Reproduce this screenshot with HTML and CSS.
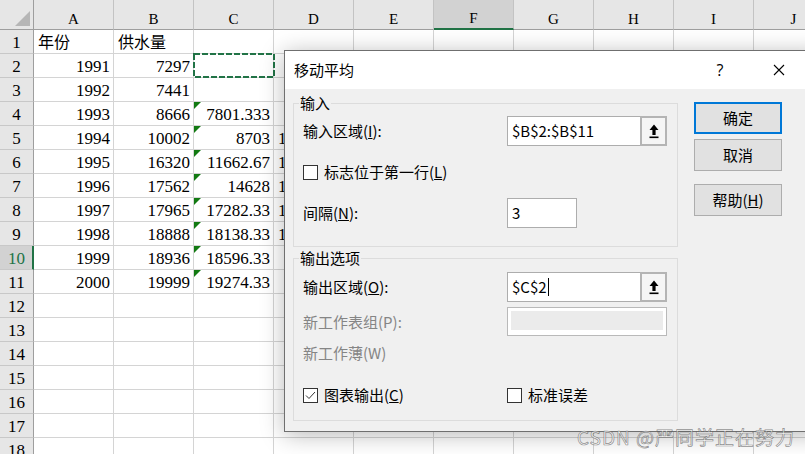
FILE: index.html
```html
<!DOCTYPE html>
<html lang="zh">
<head>
<meta charset="utf-8">
<title>移动平均</title>
<link rel="stylesheet" href="styles.css">
</head>
<body>
<div class="sheet">
  <div class="row hdr">
    <div class="rh corner"><span class="ctri"></span></div>
    <div class="ch">A</div><div class="ch">B</div><div class="ch">C</div><div class="ch">D</div><div class="ch">E</div>
    <div class="ch sel">F</div><div class="ch">G</div><div class="ch">H</div><div class="ch">I</div><div class="ch">J</div>
  </div>
  <div class="row"><div class="rh">1</div><div class="c cjk">年份</div><div class="c cjk">供水量</div><div class="c"></div><div class="c"></div><div class="c"></div><div class="c"></div><div class="c"></div><div class="c"></div><div class="c"></div><div class="c"></div></div>
  <div class="row"><div class="rh">2</div><div class="c n">1991</div><div class="c n">7297</div><div class="c"><svg class="ants" viewBox="0 0 82 25"><rect x="1" y="1" width="80" height="23" fill="none" stroke="#217346" stroke-width="2" stroke-dasharray="6 2"/></svg></div><div class="c"></div><div class="c"></div><div class="c"></div><div class="c"></div><div class="c"></div><div class="c"></div><div class="c"></div></div>
  <div class="row"><div class="rh">3</div><div class="c n">1992</div><div class="c n">7441</div><div class="c"></div><div class="c"></div><div class="c"></div><div class="c"></div><div class="c"></div><div class="c"></div><div class="c"></div><div class="c"></div></div>
  <div class="row"><div class="rh">4</div><div class="c n">1993</div><div class="c n">8666</div><div class="c n tri">7801.333</div><div class="c"></div><div class="c"></div><div class="c"></div><div class="c"></div><div class="c"></div><div class="c"></div><div class="c"></div></div>
  <div class="row"><div class="rh">5</div><div class="c n">1994</div><div class="c n">10002</div><div class="c n tri">8703</div><div class="c">1</div><div class="c"></div><div class="c"></div><div class="c"></div><div class="c"></div><div class="c"></div><div class="c"></div></div>
  <div class="row"><div class="rh">6</div><div class="c n">1995</div><div class="c n">16320</div><div class="c n tri">11662.67</div><div class="c">1</div><div class="c"></div><div class="c"></div><div class="c"></div><div class="c"></div><div class="c"></div><div class="c"></div></div>
  <div class="row"><div class="rh">7</div><div class="c n">1996</div><div class="c n">17562</div><div class="c n tri">14628</div><div class="c">1</div><div class="c"></div><div class="c"></div><div class="c"></div><div class="c"></div><div class="c"></div><div class="c"></div></div>
  <div class="row"><div class="rh">8</div><div class="c n">1997</div><div class="c n">17965</div><div class="c n tri">17282.33</div><div class="c">1</div><div class="c"></div><div class="c"></div><div class="c"></div><div class="c"></div><div class="c"></div><div class="c"></div></div>
  <div class="row"><div class="rh">9</div><div class="c n">1998</div><div class="c n">18888</div><div class="c n tri">18138.33</div><div class="c">1</div><div class="c"></div><div class="c"></div><div class="c"></div><div class="c"></div><div class="c"></div><div class="c"></div></div>
  <div class="row"><div class="rh sel">10</div><div class="c n">1999</div><div class="c n">18936</div><div class="c n tri">18596.33</div><div class="c"></div><div class="c"></div><div class="c"></div><div class="c"></div><div class="c"></div><div class="c"></div><div class="c"></div></div>
  <div class="row"><div class="rh">11</div><div class="c n">2000</div><div class="c n">19999</div><div class="c n tri">19274.33</div><div class="c"></div><div class="c"></div><div class="c"></div><div class="c"></div><div class="c"></div><div class="c"></div><div class="c"></div></div>
  <div class="row"><div class="rh">12</div><div class="c"></div><div class="c"></div><div class="c"></div><div class="c"></div><div class="c"></div><div class="c"></div><div class="c"></div><div class="c"></div><div class="c"></div><div class="c"></div></div>
  <div class="row"><div class="rh">13</div><div class="c"></div><div class="c"></div><div class="c"></div><div class="c"></div><div class="c"></div><div class="c"></div><div class="c"></div><div class="c"></div><div class="c"></div><div class="c"></div></div>
  <div class="row"><div class="rh">14</div><div class="c"></div><div class="c"></div><div class="c"></div><div class="c"></div><div class="c"></div><div class="c"></div><div class="c"></div><div class="c"></div><div class="c"></div><div class="c"></div></div>
  <div class="row"><div class="rh">15</div><div class="c"></div><div class="c"></div><div class="c"></div><div class="c"></div><div class="c"></div><div class="c"></div><div class="c"></div><div class="c"></div><div class="c"></div><div class="c"></div></div>
  <div class="row"><div class="rh">16</div><div class="c"></div><div class="c"></div><div class="c"></div><div class="c"></div><div class="c"></div><div class="c"></div><div class="c"></div><div class="c"></div><div class="c"></div><div class="c"></div></div>
  <div class="row"><div class="rh">17</div><div class="c"></div><div class="c"></div><div class="c"></div><div class="c"></div><div class="c"></div><div class="c"></div><div class="c"></div><div class="c"></div><div class="c"></div><div class="c"></div></div>
  <div class="row"><div class="rh">18</div><div class="c"></div><div class="c"></div><div class="c"></div><div class="c"></div><div class="c"></div><div class="c"></div><div class="c"></div><div class="c"></div><div class="c"></div><div class="c"></div></div>
</div>

<div class="dlg">
  <div class="tbar">
    <span class="title">移动平均</span>
    <span class="help">?</span>
    <span class="close"><svg width="12" height="12" viewBox="0 0 12 12"><path d="M1 1 L11 11 M11 1 L1 11" stroke="#000" stroke-width="1.1" fill="none"/></svg></span>
  </div>
  <div class="dbody">
    <div class="groups">
      <div class="grp g1">
        <div class="legend">输入</div>
        <div class="frow r1"><span class="lbl">输入区域(<u>I</u>):</span><div class="ref"><span class="val">$B$2:$B$11</span><span class="rbtn"><svg width="10" height="15" viewBox="0 0 10 15"><path d="M5 0.5 L9.5 6 L6.6 6 L6.6 11 L3.4 11 L3.4 6 L0.5 6 Z" fill="#000"/><rect x="0.5" y="12.5" width="9" height="1.6" fill="#000"/></svg></span></div></div>
        <div class="frow r2"><span class="chk"><span class="box"></span>标志位于第一行(<u>L</u>)</span></div>
        <div class="frow r3"><span class="lbl">间隔(<u>N</u>):</span><div class="txt">3</div></div>
      </div>
      <div class="grp g2">
        <div class="legend">输出选项</div>
        <div class="frow r1"><span class="lbl">输出区域(<u>O</u>):</span><div class="ref"><span class="val">$C$2<span class="caret"></span></span><span class="rbtn"><svg width="10" height="15" viewBox="0 0 10 15"><path d="M5 0.5 L9.5 6 L6.6 6 L6.6 11 L3.4 11 L3.4 6 L0.5 6 Z" fill="#000"/><rect x="0.5" y="12.5" width="9" height="1.6" fill="#000"/></svg></span></div></div>
        <div class="frow r2"><span class="lbl gray">新工作表组(P):</span><div class="dis"><span></span></div></div>
        <div class="frow r3"><span class="lbl gray">新工作薄(W)</span></div>
        <div class="frow r4">
          <span class="chk lbl"><span class="box on"><svg width="13" height="13" viewBox="0 0 13 13"><path d="M2 6.5 L5 9.5 L11 3" stroke="#333" stroke-width="1" fill="none"/></svg></span>图表输出(<u>C</u>)</span>
          <span class="chk"><span class="box"></span>标准误差</span>
        </div>
      </div>
    </div>
    <div class="btns">
      <div class="btn def">确定</div>
      <div class="btn">取消</div>
      <div class="btn h">帮助(<u>H</u>)</div>
    </div>
  </div>
</div>

<div class="wm">CSDN @严同学正在努力</div>
</body>
</html>
```

FILE: styles.css
```css
html, body {
  margin: 0;
  padding: 0;
  overflow: hidden;
  background: #fff;
}
body {
  position: relative;
  width: 805px;
  height: 454px;
}

/* ---------- spreadsheet ---------- */
.sheet {
  font-family: "Liberation Serif", serif;
  font-size: 17px;
  color: #000;
  width: 840px;
}
.row {
  display: flex;
  height: 24px;
}
.row.hdr { height: 30px; }

.rh {
  flex: none;
  width: 34px;
  box-sizing: border-box;
  border-right: 1px solid #9e9e9e;
  border-bottom: 1px solid #c8c8c8;
  background: #e6e6e6;
  display: flex;
  align-items: flex-end;
  justify-content: center;
  line-height: 20px;
}
.rh.sel {
  background: #d2d2d2;
  border-right: 2px solid #217346;
  color: #217346;
  padding-left: 1px;
}
.rh.corner {
  border-bottom: 1px solid #9e9e9e;
  justify-content: flex-end;
  padding: 0 3px 3px 0;
}
.ctri {
  width: 0;
  height: 0;
  border-left: 15px solid transparent;
  border-bottom: 15px solid #b6b6b6;
}
.ch {
  flex: none;
  width: 80px;
  box-sizing: border-box;
  background: #e6e6e6;
  border-right: 1px solid #c3c3c3;
  border-bottom: 1px solid #9e9e9e;
  display: flex;
  align-items: flex-end;
  justify-content: center;
  font-size: 15px;
  line-height: 20px;
}
.ch.sel {
  background: #d2d2d2;
  border-bottom: 2px solid #217346;
  line-height: 19px;
}

.c {
  flex: none;
  width: 80px;
  box-sizing: border-box;
  border-right: 1px solid #d4d4d4;
  border-bottom: 1px solid #d4d4d4;
  position: relative;
  display: flex;
  align-items: flex-end;
  line-height: 20px;
  padding: 0 3px 0 4px;
  white-space: nowrap;
}
.c.n { justify-content: flex-end; }
.c.cjk {
  font-family: "Noto Sans CJK SC", sans-serif;
  font-size: 16px;
  line-height: 23px;
  align-items: center;
}
.c.tri::before {
  content: "";
  position: absolute;
  left: 0;
  top: 0;
  border-top: 7px solid #127a12;
  border-right: 7px solid transparent;
}
.ants {
  position: absolute;
  left: -1px;
  top: -1px;
  width: 82px;
  height: 25px;
}

/* ---------- dialog ---------- */
.dlg {
  position: absolute;
  left: 284px;
  top: 50px;
  width: 540px;
  height: 382px;
  box-sizing: border-box;
  border: 1px solid #6f6f6f;
  background: #f0f0f0;
  box-shadow: 0 3px 22px rgba(0, 0, 0, 0.28);
  font-family: "Noto Sans CJK SC", sans-serif;
  font-size: 15px;
  color: #000;
}
.tbar {
  height: 38px;
  background: #fff;
  display: flex;
  align-items: center;
  padding-left: 9px;
  line-height: 20px;
}
.title { flex: 1; }
.help {
  width: 46px;
  text-align: center;
  margin-right: 13px;
  font-family: "Open Sans", sans-serif;
  font-size: 16px;
}
.close {
  width: 46px;
  margin-right: 21px;
  display: flex;
  justify-content: center;
}

.dbody {
  display: flex;
  padding: 13px 0 0 8px;
}
.groups {
  width: 385px;
  margin-top: 1px;
  flex: none;
}
.grp {
  box-sizing: border-box;
  border: 1px solid #dcdcdc;
  padding: 0 9px;
}
.g1 { height: 144px; }
.g2 { height: 163px; margin-top: 11px; }
.legend {
  height: 20px;
  line-height: 20px;
  margin: -11px 0 0 -4px;
  padding: 0 1px;
  background: #f0f0f0;
  width: fit-content;
}
.frow {
  display: flex;
  align-items: center;
  line-height: 20px;
}
.g1 .r1 { margin-top: 3px; height: 30px; }
.g1 .r2 { height: 52px; }
.g1 .r3 { height: 30px; }
.g2 .r1 { margin-top: 4px; height: 30px; }
.g2 .r2 { margin-top: 5px; height: 29px; }
.g2 .r3 { height: 33px; }
.g2 .r4 { margin-top: 11px; height: 30px; }

.lbl {
  width: 204px;
  flex: none;
  white-space: nowrap;
}
.gray { color: #858585; }

.ref {
  width: 160px;
  height: 30px;
  box-sizing: border-box;
  border: 1px solid #adadad;
  background: #fff;
  display: flex;
}
.ref .val {
  flex: 1;
  padding-left: 4px;
  line-height: 28px;
  display: flex;
  align-items: center;
}
.caret {
  display: inline-block;
  width: 1px;
  height: 18px;
  background: #000;
  margin-left: 1px;
}
.rbtn {
  width: 27px;
  margin: -1px -1px -1px 0;
  box-sizing: border-box;
  border: 2px solid #b4b4b4;
  background: #f5f5f5;
  display: flex;
  align-items: center;
  justify-content: center;
}
.txt {
  width: 70px;
  height: 30px;
  box-sizing: border-box;
  border: 1px solid #adadad;
  background: #fff;
  padding-left: 4px;
  line-height: 28px;
}
.dis {
  width: 160px;
  height: 29px;
  box-sizing: border-box;
  border: 1px solid #b9b9b9;
  background: #fff;
  padding: 3px 3px 5px 3px;
}
.dis span {
  display: block;
  height: 100%;
  background: #ebebeb;
}

.chk {
  display: flex;
  align-items: center;
}
.box {
  width: 15px;
  height: 15px;
  flex: none;
  box-sizing: border-box;
  border: 1px solid #333;
  background: #fff;
  margin-right: 6px;
  display: flex;
  align-items: center;
  justify-content: center;
}

.btns {
  margin-left: 16px;
  width: 88px;
  display: flex;
  flex-direction: column;
  flex: none;
}
.btn {
  height: 32px;
  box-sizing: border-box;
  border: 1px solid #adadad;
  background: #e1e1e1;
  display: flex;
  align-items: center;
  justify-content: center;
  line-height: 20px;
}
.btn.def { border: 2px solid #0078d7; }
.btn + .btn { margin-top: 5px; }
.btn.h { margin-top: 13px; }

/* ---------- watermark ---------- */
.wm {
  position: absolute;
  right: 10px;
  bottom: 5px;
  font-family: "Noto Sans CJK SC", sans-serif;
  font-size: 19px;
  line-height: 24px;
  letter-spacing: 1px;
  color: rgba(255, 255, 255, 0.7);
  -webkit-text-stroke: 0.7px rgba(80, 80, 80, 0.65);
}
```
